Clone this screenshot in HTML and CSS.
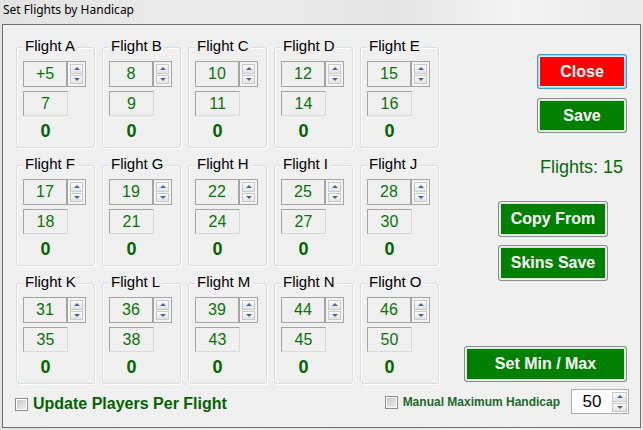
FILE: index.html
```html
<!DOCTYPE html>
<html lang="en">
<head>
    <meta charset="UTF-8">
    <title>Set Flights by Handicap</title>
    <link rel="stylesheet" href="styles.css">
</head>
<body>
<div class="titlebar">Set Flights by Handicap</div>
<div class="window">
    <div class="main">
        <div class="flights">
            <div class="group">
                <span class="legend">Flight A</span>
                <div class="spinner"><span class="field">+5</span><span class="spin"><i class="up"></i><i class="down"></i></span></div>
                <div class="field max">7</div>
                <div class="count">0</div>
            </div>
            <div class="group">
                <span class="legend">Flight B</span>
                <div class="spinner"><span class="field">8</span><span class="spin"><i class="up"></i><i class="down"></i></span></div>
                <div class="field max">9</div>
                <div class="count">0</div>
            </div>
            <div class="group">
                <span class="legend">Flight C</span>
                <div class="spinner"><span class="field">10</span><span class="spin"><i class="up"></i><i class="down"></i></span></div>
                <div class="field max">11</div>
                <div class="count">0</div>
            </div>
            <div class="group">
                <span class="legend">Flight D</span>
                <div class="spinner"><span class="field">12</span><span class="spin"><i class="up"></i><i class="down"></i></span></div>
                <div class="field max">14</div>
                <div class="count">0</div>
            </div>
            <div class="group">
                <span class="legend">Flight E</span>
                <div class="spinner"><span class="field">15</span><span class="spin"><i class="up"></i><i class="down"></i></span></div>
                <div class="field max">16</div>
                <div class="count">0</div>
            </div>

            <div class="group">
                <span class="legend">Flight F</span>
                <div class="spinner"><span class="field">17</span><span class="spin"><i class="up"></i><i class="down"></i></span></div>
                <div class="field max">18</div>
                <div class="count">0</div>
            </div>
            <div class="group">
                <span class="legend">Flight G</span>
                <div class="spinner"><span class="field">19</span><span class="spin"><i class="up"></i><i class="down"></i></span></div>
                <div class="field max">21</div>
                <div class="count">0</div>
            </div>
            <div class="group">
                <span class="legend">Flight H</span>
                <div class="spinner"><span class="field">22</span><span class="spin"><i class="up"></i><i class="down"></i></span></div>
                <div class="field max">24</div>
                <div class="count">0</div>
            </div>
            <div class="group">
                <span class="legend">Flight I</span>
                <div class="spinner"><span class="field">25</span><span class="spin"><i class="up"></i><i class="down"></i></span></div>
                <div class="field max">27</div>
                <div class="count">0</div>
            </div>
            <div class="group">
                <span class="legend">Flight J</span>
                <div class="spinner"><span class="field">28</span><span class="spin"><i class="up"></i><i class="down"></i></span></div>
                <div class="field max">30</div>
                <div class="count">0</div>
            </div>

            <div class="group">
                <span class="legend">Flight K</span>
                <div class="spinner"><span class="field">31</span><span class="spin"><i class="up"></i><i class="down"></i></span></div>
                <div class="field max">35</div>
                <div class="count">0</div>
            </div>
            <div class="group">
                <span class="legend">Flight L</span>
                <div class="spinner"><span class="field">36</span><span class="spin"><i class="up"></i><i class="down"></i></span></div>
                <div class="field max">38</div>
                <div class="count">0</div>
            </div>
            <div class="group">
                <span class="legend">Flight M</span>
                <div class="spinner"><span class="field">39</span><span class="spin"><i class="up"></i><i class="down"></i></span></div>
                <div class="field max">43</div>
                <div class="count">0</div>
            </div>
            <div class="group">
                <span class="legend">Flight N</span>
                <div class="spinner"><span class="field">44</span><span class="spin"><i class="up"></i><i class="down"></i></span></div>
                <div class="field max">45</div>
                <div class="count">0</div>
            </div>
            <div class="group">
                <span class="legend">Flight O</span>
                <div class="spinner"><span class="field">46</span><span class="spin"><i class="up"></i><i class="down"></i></span></div>
                <div class="field max">50</div>
                <div class="count">0</div>
            </div>
        </div>

        <div class="side">
            <button class="btn close">Close</button>
            <button class="btn save">Save</button>
            <div class="total">Flights: 15</div>
            <button class="btn copy">Copy From</button>
            <button class="btn skins">Skins Save</button>
            <button class="btn minmax">Set Min / Max</button>
        </div>
    </div>

    <div class="footer">
        <label class="check update"><span class="box"></span>Update Players Per Flight</label>
        <label class="check manual"><span class="box"></span>Manual Maximum Handicap</label>
        <div class="hcp"><span class="value">50</span><span class="spin"><i class="up"></i><i class="down"></i></span></div>
    </div>
</div>
</body>
</html>
```

FILE: styles.css
```css
body {
    margin: 0;
    width: 643px;
    height: 430px;
    overflow: hidden;
    font-family: "Liberation Sans", Arial, sans-serif;
    background: linear-gradient(90deg, #e3e3e3 0%, #ececec 35%, #e5e5e5 62%, #f3f3f3 80%, #e9e9e9 100%);
}

.titlebar {
    height: 24px;
    padding-left: 3px;
    font: 12px/20px "Noto Sans", sans-serif;
    color: #000;
}

.window {
    margin-left: 2px;
    width: 637px;
    height: 402px;
    border: 1px solid #6f6f6f;
    background: #f0f0f0;
}

.main {
    display: flex;
    padding-left: 13px;
}

/* grid of flight group boxes */
.flights {
    margin-top: 22px;
    display: grid;
    grid-template-columns: repeat(5, 79px);
    column-gap: 7px;
    row-gap: 17px;
}

.group {
    box-sizing: border-box;
    height: 101px;
    padding-left: 6px;
    border: 1px solid #d5dfe5;
    border-radius: 3px;
    box-shadow: inset 1px 1px 0 #fff, 1px 1px 0 #fff;
}

.legend {
    display: block;
    width: fit-content;
    margin-top: -11px;
    padding: 0 2px;
    background: #f0f0f0;
    font-size: 15px;
    line-height: 18px;
    color: #000;
}

.spinner {
    display: flex;
    margin-top: 6px;
    height: 26px;
}

.field {
    box-sizing: border-box;
    display: flex;
    align-items: center;
    justify-content: center;
    width: 44px;
    height: 26px;
    border: 1px solid #a5a5a5;
    font-size: 16px;
    color: #0a740a;
}

.field.max {
    width: 45px;
    height: 25px;
    margin-top: 4px;
    border-color: #a5a5a5 #dadada #dadada #a5a5a5;
}

.count {
    width: 45px;
    margin-top: 5px;
    text-align: center;
    font-weight: bold;
    font-size: 18px;
    line-height: 20px;
    color: #006400;
}

/* up/down arrows */
.spin {
    box-sizing: border-box;
    display: flex;
    flex-direction: column;
    gap: 1px;
    width: 19px;
    height: 26px;
    padding: 2px;
    border: 1px solid #a5a5a5;
    background: #f4f4f4;
}

.spin i {
    flex: 1;
    display: flex;
    align-items: center;
    justify-content: center;
    border: 1px solid #c9c9c9;
    background: linear-gradient(#fbfbfb, #e3e3e3);
}

.spin i::after {
    content: "";
    border-left: 3px solid transparent;
    border-right: 3px solid transparent;
}

.spin .up::after {
    border-bottom: 3px solid #4c64a4;
}

.spin .down::after {
    border-top: 3px solid #4c64a4;
}

/* right hand buttons */
.side {
    display: flex;
    flex-direction: column;
    align-items: flex-start;
}

.btn {
    box-sizing: border-box;
    margin: 0;
    padding: 0;
    border: 1px solid #8a8a8a;
    border-radius: 3px;
    box-shadow: inset 0 0 0 1px #f4f4f4, inset 0 0 0 2px #e0e0e0;
    background: #008000;
    color: #fff;
    font: bold 16px "Liberation Sans", Arial, sans-serif;
}

.close {
    margin: 29px 0 0 98px;
    width: 90px;
    height: 35px;
    background: #ff0000;
    border-color: #3c9ad8;
    box-shadow: inset 0 0 0 1px #9ddcf7, inset 0 0 0 2px #d8f0fb;
}

.save {
    margin: 9px 0 0 98px;
    width: 90px;
    height: 35px;
}

.total {
    margin: 24px 0 0 101px;
    font-size: 18px;
    line-height: 21px;
    color: #0a6a0a;
}

.copy {
    margin: 23px 0 0 59px;
    width: 110px;
    height: 36px;
}

.skins {
    margin: 8px 0 0 59px;
    width: 110px;
    height: 36px;
}

.minmax {
    margin: 65px 0 0 25px;
    width: 163px;
    height: 36px;
}

/* bottom row */
.footer {
    display: flex;
    align-items: flex-start;
    padding-left: 12px;
}

.check {
    display: flex;
    align-items: center;
    font-weight: bold;
}

.box {
    box-sizing: border-box;
    width: 13px;
    height: 13px;
    border: 1px solid #8e8f8f;
    box-shadow: inset 0 0 0 1px #fff;
    background: linear-gradient(135deg, #c2c4c6, #f0f0f0);
}

.update {
    margin-top: 11px;
    gap: 5px;
    font-size: 16px;
    line-height: 18px;
    color: #006400;
}

.update .box {
    margin-top: 1px;
}

.manual {
    margin: 11px 0 0 auto;
    gap: 5px;
    font-size: 12px;
    line-height: 14px;
    color: #1d6a2a;
}

.hcp {
    box-sizing: border-box;
    display: flex;
    align-items: center;
    margin: 5px 11px 0 11px;
    width: 58px;
    height: 25px;
    padding: 2px 1px 1px 0;
    border: 1px solid #abadb3;
    background: #fff;
}

.hcp .value {
    flex: 1;
    text-align: center;
    font-size: 17px;
    color: #000;
}

.hcp .spin {
    width: 15px;
    height: 20px;
    padding: 0;
    border: none;
    background: #fff;
}
```
